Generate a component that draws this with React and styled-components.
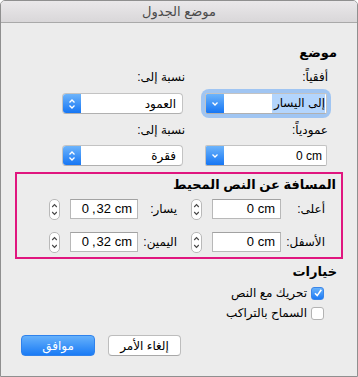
import React from 'react';
import styled, { createGlobalStyle } from 'styled-components';

const Global = createGlobalStyle`
  html, body { margin: 0; padding: 0; background: #ffffff; }
  body { font-family: "Liberation Sans", "DejaVu Sans", sans-serif; color: #000; }
  * { box-sizing: border-box; }
`;

const Window = styled.div`
  width: 358px;
  height: 377px;
  border: 1px solid #8f8f8f;
  border-radius: 5px 5px 0 0;
  background: #ececec;
  overflow: hidden;
  display: flex;
  flex-direction: column;
`;

const TitleBar = styled.div`
  height: 22px;
  flex: none;
  background: linear-gradient(#eae8ea, #d9d7d9);
  border-bottom: 1px solid #a9a9a9;
  display: flex;
  align-items: center;
  justify-content: center;
  font-size: 13px;
  color: #4a4a4a;
`;

const Body = styled.div`
  direction: rtl;
  display: flex;
  flex-direction: column;
`;

const Heading = styled.div`
  font-weight: bold;
  font-size: 13px;
  line-height: 16px;
  height: 16px;
  margin-top: ${p => p.$mt}px;
  margin-right: ${p => p.$mr}px;
`;

const PosGrid = styled.div`
  display: grid;
  grid-template-columns: 122px 121px;
  column-gap: 22px;
  padding-right: 30px;
  margin-top: ${p => p.$mt}px;
  align-items: center;
`;

const FieldLabel = styled.div`
  font-size: 12px;
  line-height: 16px;
  height: 16px;
  margin-right: ${p => p.$mr || 0}px;
`;

const PopupWrap = styled.div`
  height: 21px;
  border-radius: 4px;
  ${p => p.$focused && `box-shadow: 0 0 0 4px #a0c5f2;`}
`;

const Popup = styled.div`
  height: 21px;
  display: flex;
  align-items: stretch;
  background: #ffffff;
  border: 1px solid #c3c3c3;
  border-bottom-color: #b0b0b0;
  border-radius: ${p => (p.$combo ? '2px' : '4px')};
  overflow: hidden;
  font-size: 12px;
`;

const PopupText = styled.div`
  flex: 1;
  display: flex;
  align-items: center;
  justify-content: ${p => (p.$dir === 'ltr' ? 'flex-end' : 'flex-start')};
  padding: 0 ${p => p.$pad}px;
  direction: ${p => p.$dir || 'rtl'};
  white-space: nowrap;
`;

const Selected = styled.span`
  background: #b3d5fd;
  padding: 1px 0 1px 2px;
  line-height: 17px;
`;

const ArrowBox = styled.div`
  width: 18px;
  flex: none;
  background: linear-gradient(#6db4fb, #1676f4);
  display: flex;
  align-items: center;
  justify-content: center;
`;

const PinkBox = styled.div`
  margin: 6px 14px 0 14px;
  height: 87px;
  border: 2px solid #e0167f;
  display: flex;
  flex-direction: column;
  padding-right: 16px;
`;

const DistRow = styled.div`
  display: flex;
  align-items: center;
  gap: 14px;
  margin-top: ${p => p.$mt}px;
  height: 20px;
`;

const Group = styled.div`
  display: flex;
  align-items: center;
`;

const GLabel = styled.div`
  width: ${p => p.$w}px;
  font-size: 12px;
  white-space: nowrap;
`;

const TextField = styled.div`
  width: ${p => p.$w}px;
  height: 20px;
  background: #fff;
  border: 1px solid #b8b8b8;
  border-top-color: #a2a2a2;
  direction: ltr;
  text-align: right;
  font-size: 13px;
  line-height: 18px;
  padding-right: 5px;
  white-space: nowrap;
`;

const Comma = styled.span`
  margin: 0 1px 0 3px;
`;

const Stepper = styled.div`
  width: 11px;
  height: 21px;
  margin-right: 10px;
  background: #fff;
  border: 1px solid #b9b9b9;
  border-radius: 5px;
  display: flex;
  align-items: center;
  justify-content: center;
`;

const CheckRow = styled.div`
  display: flex;
  align-items: center;
  height: 18px;
  margin-top: ${p => p.$mt}px;
  padding-right: 33px;
  font-size: 12px;
`;

const Box = styled.div`
  width: 13px;
  height: 13px;
  border-radius: 3px;
  margin-left: 4px;
  display: flex;
  align-items: center;
  justify-content: center;
  ${p =>
    p.$checked
      ? `background: linear-gradient(#6ab3fb, #1b7af5); border: 1px solid #3b86e8;`
      : `background: #fff; border: 1px solid #b3b3b3;`}
`;

const Buttons = styled.div`
  display: flex;
  justify-content: flex-end;
  gap: 13px;
  padding-left: 20px;
  margin-top: 13px;
`;

const Button = styled.div`
  width: ${p => p.$w}px;
  height: 21px;
  border-radius: 4px;
  display: flex;
  align-items: center;
  justify-content: center;
  font-size: 12px;
  ${p =>
    p.$primary
      ? `background: linear-gradient(#66b1fb, #1a7bf5); color: #fff; border: 1px solid #2f82ec;`
      : `background: #fff; color: #000; border: 1px solid #bdbdbd; border-bottom-color: #a8a8a8;`}
`;

const Chevron = ({ double }) =>
  double ? (
    <svg width="8" height="12" viewBox="0 0 8 12">
      <path d="M1.5 4.5 L4 2 L6.5 4.5" fill="none" stroke="#fff" strokeWidth="1.3" />
      <path d="M1.5 7.5 L4 10 L6.5 7.5" fill="none" stroke="#fff" strokeWidth="1.3" />
    </svg>
  ) : (
    <svg width="8" height="6" viewBox="0 0 8 6">
      <path d="M1.5 1.5 L4 4 L6.5 1.5" fill="none" stroke="#fff" strokeWidth="1.3" />
    </svg>
  );

const StepIcon = () => (
  <svg width="7" height="15" viewBox="0 0 7 15">
    <path d="M1.2 5 L3.5 2.6 L5.8 5" fill="none" stroke="#444" strokeWidth="1.1" />
    <path d="M1.2 10 L3.5 12.4 L5.8 10" fill="none" stroke="#444" strokeWidth="1.1" />
  </svg>
);

const Check = () => (
  <svg width="10" height="10" viewBox="0 0 10 10">
    <path d="M2 5.2 L4.2 7.6 L8.3 1.8" fill="none" stroke="#fff" strokeWidth="1.6" />
  </svg>
);

const Dist = ({ label, w, value }) => (
  <Group>
    <GLabel $w={w}>{label}</GLabel>
    <TextField $w={value.includes(',') ? 68 : 69}>
      {value.includes(',') ? (
        <>
          0<Comma>,</Comma>32 cm
        </>
      ) : (
        value
      )}
    </TextField>
    <Stepper>
      <StepIcon />
    </Stepper>
  </Group>
);

export default function App() {
  return (
    <>
      <Global />
      <Window>
        <TitleBar>موضع الجدول</TitleBar>
        <Body>
          <Heading $mt={22} $mr={20}>موضع</Heading>
          <PosGrid $mt={8}>
            <FieldLabel $mr={-1}>أفقياً:</FieldLabel>
            <FieldLabel $mr={-2}>نسبة إلى:</FieldLabel>
          </PosGrid>
          <PosGrid $mt={8}>
            <PopupWrap $focused>
              <Popup $combo>
                <PopupText $pad={1}>
                  <Selected>إلى اليسار</Selected>
                </PopupText>
                <ArrowBox>
                  <Chevron />
                </ArrowBox>
              </Popup>
            </PopupWrap>
            <PopupWrap>
              <Popup>
                <PopupText $pad={6}>العمود</PopupText>
                <ArrowBox>
                  <Chevron double />
                </ArrowBox>
              </Popup>
            </PopupWrap>
          </PosGrid>
          <PosGrid $mt={8}>
            <FieldLabel $mr={-1}>عمودياً:</FieldLabel>
            <FieldLabel $mr={-2}>نسبة إلى:</FieldLabel>
          </PosGrid>
          <PosGrid $mt={7}>
            <PopupWrap>
              <Popup $combo>
                <PopupText $pad={4} $dir="ltr">0 cm</PopupText>
                <ArrowBox>
                  <Chevron />
                </ArrowBox>
              </Popup>
            </PopupWrap>
            <PopupWrap>
              <Popup>
                <PopupText $pad={6}>فقرة</PopupText>
                <ArrowBox>
                  <Chevron double />
                </ArrowBox>
              </Popup>
            </PopupWrap>
          </PosGrid>
          <PinkBox>
            <Heading $mt={3} $mr={-11}>المسافة عن النص المحيط</Heading>
            <DistRow $mt={6}>
              <Dist label="أعلى:" w={44} value="0 cm" />
              <Dist label="يسار:" w={39} value="0,32 cm" />
            </DistRow>
            <DistRow $mt={13}>
              <Dist label="الأسفل:" w={44} value="0 cm" />
              <Dist label="اليمين:" w={39} value="0,32 cm" />
            </DistRow>
          </PinkBox>
          <Heading $mt={5} $mr={20}>خيارات</Heading>
          <CheckRow $mt={4}>
            <Box $checked>
              <Check />
            </Box>
            تحريك مع النص
          </CheckRow>
          <CheckRow $mt={2}>
            <Box />
            السماح بالتراكب
          </CheckRow>
          <Buttons>
            <Button $w={73}>إلغاء الأمر</Button>
            <Button $w={74} $primary>موافق</Button>
          </Buttons>
        </Body>
      </Window>
    </>
  );
}
